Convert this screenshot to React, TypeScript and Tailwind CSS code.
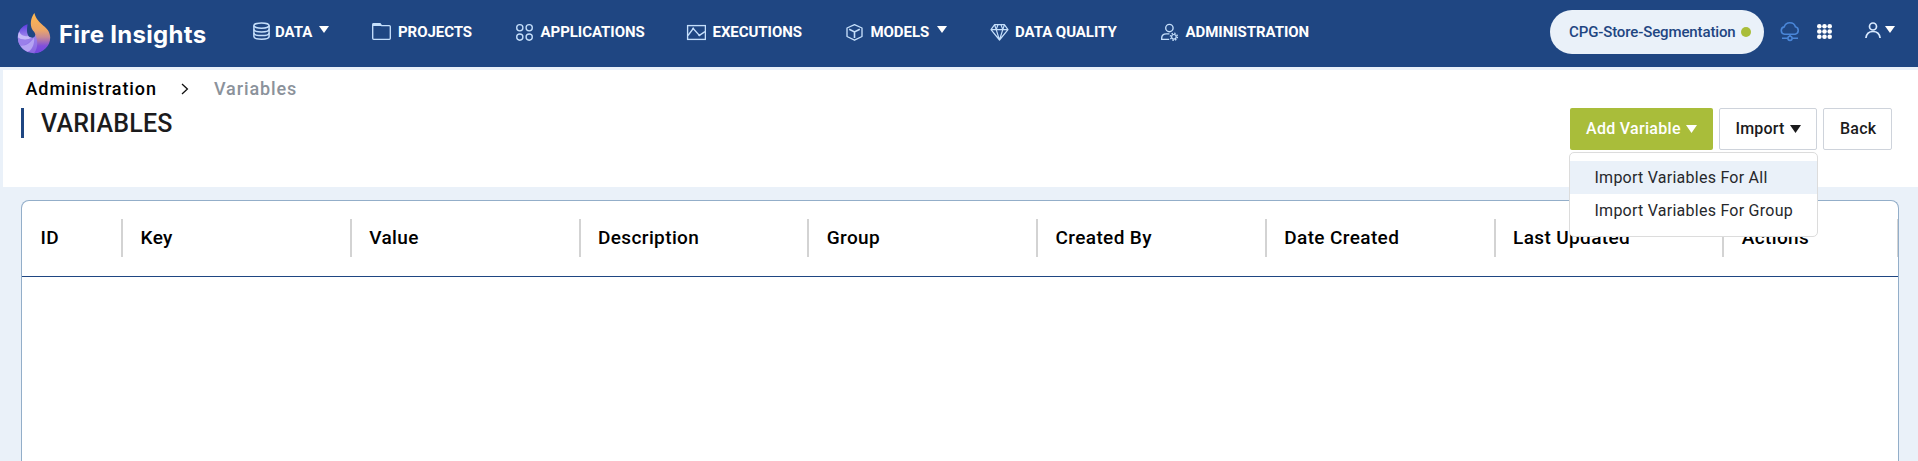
import React from "react";

const ICON = "#c5dffb";

function Caret({ className = "" }: { className?: string }) {
  return (
    <svg className={className} width="10" height="7" viewBox="0 0 10 7" preserveAspectRatio="none" fill="currentColor">
      <path d="M0 0H10L5 7Z" />
    </svg>
  );
}

function NavIcon({ children }: { children: React.ReactNode }) {
  return (
    <svg className="h-5 w-5 shrink-0" viewBox="0 0 20 20" fill="none" stroke={ICON} strokeWidth="1.35">
      {children}
    </svg>
  );
}

function DatabaseIcon() {
  return (
    <NavIcon>
      <g strokeWidth="1.5">
        <ellipse cx="9.5" cy="3.6" rx="7.6" ry="2.6" />
        <path d="M1.9 3.6v10.900c0 1.600 3.400 2.700 7.600 2.700s7.600-1.100 7.600-2.700V3.600" />
        <path d="M1.900 7.300c0 1.500 3.400 2.600 7.600 2.600s7.600-1.100 7.600-2.600M1.900 11c0 1.500 3.400 2.600 7.600 2.600s7.600-1.100 7.600-2.600" />
      </g>
    </NavIcon>
  );
}

function FolderIcon() {
  return (
    <NavIcon>
      <path d="M1.7 3.5V16.3q0 1 1 1H18.3q1 0 1-1V4.6q0-1-1-1H10.6L9 1.7H2.7q-1 0-1 1Z" />
      <path d="M1.6 1.2H9L11 4H1.6Z" fill={ICON} stroke="none" />
    </NavIcon>
  );
}

function AppsIcon() {
  return (
    <NavIcon>
      <circle cx="4.8" cy="5.7" r="3.1" />
      <circle cx="14.2" cy="5.7" r="3.1" />
      <circle cx="4.8" cy="15.1" r="3.1" />
      <circle cx="14.2" cy="15.1" r="3.1" />
    </NavIcon>
  );
}

function ExecutionsIcon() {
  return (
    <NavIcon>
      <rect x="1.6" y="3.6" width="17.8" height="13.8" />
      <path d="M2 13.5L7.2 6.6L13.4 13.4L19 9.6" />
      <path d="M6.2 6.6a1 1 0 1 0 2 0a1 1 0 1 0-2 0M12.3 13.2a1 1 0 1 0 2 0a1 1 0 1 0-2 0" fill={ICON} stroke="none" />
    </NavIcon>
  );
}

function CubeIcon() {
  return (
    <NavIcon>
      <path d="M9.5 2.6L17 6V14.5L9.5 18.2L2 14.5V6Z" strokeLinejoin="round" />
      <path d="M4.2 7.2L9.5 9.9L14.8 7.2M9.5 9.9V16" strokeWidth="1.6" />
    </NavIcon>
  );
}

function DiamondIcon() {
  return (
    <NavIcon>
      <path
        d="M4.6 2.7H14.4L18 7.6L9.5 18L1 7.6ZM1 7.6H18M6.2 7.6L9.5 18L12.8 7.6M4.6 2.7L6.2 7.6L8 2.7M11 2.7L12.8 7.6L14.4 2.7"
        strokeLinejoin="round"
        strokeWidth="1.2"
      />
    </NavIcon>
  );
}

function UserGearIcon() {
  return (
    <NavIcon>
      <circle cx="9.4" cy="6" r="3.7" />
      <path d="M9.2 17.4H1.7V16c0-2.6 2-4.2 4.6-4.2H9.4" />
      <circle cx="13.9" cy="14.8" r="2.3" strokeWidth="1.2" />
      <circle cx="13.9" cy="14.8" r="3.5" strokeWidth="1.4" strokeDasharray="1.37 1.37" />
    </NavIcon>
  );
}

function Logo() {
  return (
    <svg className="h-[42px] w-[34px] shrink-0" viewBox="0 0 34 42">
      <defs>
        <linearGradient id="flame" x1="0" y1="0" x2="0" y2="1">
          <stop offset="0" stopColor="#ffb84d" />
          <stop offset="0.42" stopColor="#eda667" />
          <stop offset="0.6" stopColor="#c78a95" />
          <stop offset="0.82" stopColor="#7f4fdc" />
          <stop offset="1" stopColor="#7446e0" />
        </linearGradient>
        <linearGradient id="swirl" x1="0.3" y1="0" x2="0.4" y2="1">
          <stop offset="0" stopColor="#5a3be0" />
          <stop offset="0.4" stopColor="#9b83ec" />
          <stop offset="1" stopColor="#8a66e0" />
        </linearGradient>
      </defs>
      <path d="M10.600 12.200C5 13.800 .8 19 .8 25.600C.8 34.400 8 41.200 17 41.200C23 41.200 27 38 28 33L18.400 22.500C18 25.600 15.600 26.200 13.600 25.400C9.800 23.800 9.400 19 10.600 12.200Z" fill="url(#swirl)" />
      <path d="M2.200 19.800C3.600 22.800 7 25 11 24C12 25.200 13.600 25.800 15.200 25.600C11 28.400 5 28.500 .9 25.500C.9 23.400 1.400 21.600 2.200 19.800Z" fill="#c6baf8" />
      <path d="M15.200 25.600C12 31 7 34.500 3.200 33.600C1.600 31.200 .8 28.600 .9 25.500C5 28.500 11 28.400 15.200 25.600Z" fill="#9a80ea" />
      <path d="M17 25.400C18 33 14 39 10.400 39.800C7.400 38.600 4.800 36.400 3.200 33.600C9 34 14 30.600 17 25.400Z" fill="#b5a3f3" />
      <path d="M17.400 1C14.400 5 13 10.500 14.400 15.400C15.200 18.400 18.200 19.800 18.400 23C20.800 28 21.400 36 17 41.200C26 41.200 33.200 34.400 33.200 25.600C33.200 14 20.500 13.500 17.400 1Z" fill="url(#flame)" />
    </svg>
  );
}

type NavEntry = {
  label: string;
  icon: React.ReactNode;
  width: string;
  gap: string;
  caret?: string;
};

const NAV: NavEntry[] = [
  { label: "DATA", icon: <DatabaseIcon />, width: "w-[119px]", gap: "ml-[3px]", caret: "ml-[7px]" },
  { label: "PROJECTS", icon: <FolderIcon />, width: "w-36", gap: "ml-[7px]" },
  { label: "APPLICATIONS", icon: <AppsIcon />, width: "w-[171px]", gap: "ml-[5.500px]" },
  { label: "EXECUTIONS", icon: <ExecutionsIcon />, width: "w-[159px]", gap: "ml-[6.500px]" },
  { label: "MODELS", icon: <CubeIcon />, width: "w-[145px]", gap: "ml-[5.500px]", caret: "ml-[7.500px]" },
  { label: "DATA QUALITY", icon: <DiamondIcon />, width: "w-[170px]", gap: "ml-[5px]" },
  { label: "ADMINISTRATION", icon: <UserGearIcon />, width: "w-[160px]", gap: "ml-[5.500px]" },
];

function TopBar() {
  return (
    <header className="flex h-[67px] items-start bg-[#1f4682] text-white">
      <div className="flex w-[252px] shrink-0 items-start pt-3 pl-[17px]">
        <Logo />
        <span className="mt-[6px] ml-[8px] whitespace-nowrap font-['Inter',sans-serif] text-[24px] leading-[34px] font-bold tracking-[0.300px]">
          Fire Insights
        </span>
      </div>
      <nav className="flex shrink-0 pt-[22px]">
        {NAV.map((n) => (
          <a key={n.label} className={`flex h-5 shrink-0 items-start ${n.width}`}>
            {n.icon}
            <span className={`whitespace-nowrap text-[15px] leading-5 font-bold tracking-[-0.050px] ${n.gap}`}>{n.label}</span>
            {n.caret && <Caret className={`mt-1 ${n.caret}`} />}
          </a>
        ))}
      </nav>
      <div className="ml-auto flex items-start pt-[10px] pr-[23px]">
        <div className="flex h-11 w-[214px] items-center rounded-full bg-[#eaf1f9] pl-[19px] text-[15px] font-medium text-[#1f4682]">
          <span className="whitespace-nowrap tracking-[-0.120px]">CPG-Store-Segmentation</span>
          <span className="mr-[13px] ml-auto h-[10px] w-[10px] rounded-full bg-[#a9bd3a]" />
        </div>
        <svg className="mt-[11px] ml-[16px]" width="20" height="21" viewBox="0 0 20 21" fill="none" stroke="#4a86d8" strokeWidth="1.6">
          <path d="M4.6 13.2a3.7 3.7 0 0 1-.4-7.3C5 3.2 7 1.7 9.8 1.7s5 1.6 5.6 4.1a3.8 3.8 0 0 1-.2 7.4Z" />
          <path d="M10 13.2V15.2M2 17.3H7.8M12.2 17.3H18" />
          <circle cx="10" cy="17.3" r="2.1" />
        </svg>
        <svg className="mt-[14px] ml-[17px]" width="15" height="15" viewBox="0 0 15 15" fill="#ffffff">
          {[2.3, 7.5, 12.7].map((y) =>
            [2.3, 7.5, 12.7].map((x) => <circle key={`${x}-${y}`} cx={x} cy={y} r="2.3" />)
          )}
        </svg>
        <svg className="mt-3 ml-[33px]" width="16" height="16" viewBox="0 0 16 16" fill="none" stroke="#d9eaff" strokeWidth="1.7">
          <circle cx="8" cy="4.5" r="3.5" />
          <path d="M.9 16c.5-4 3.3-6.5 7.1-6.5s6.600 2.500 7.100 6.500" />
        </svg>
        <Caret className="mt-4 ml-1" />
      </div>
    </header>
  );
}

function ImportMenu() {
  return (
    <div className="absolute top-[44px] -left-[1px] z-10 h-[85px] w-[249px] rounded-[5px] border border-[#dcdcdc] bg-white pt-2 text-[16px] font-normal tracking-[0.250px] text-[#26282c]">
      <div className="h-[33px] bg-[#eaf1f9] pl-[24.500px] leading-[33px]">Import Variables For All</div>
      <div className="h-[33px] pl-[24.500px] leading-[33px]">Import Variables For Group</div>
    </div>
  );
}

function PageHead() {
  return (
    <section className="mt-[3px] ml-[3px] flex h-[117px] items-start justify-between bg-white pr-[26px]">
      <div className="flex flex-col pl-[18px]">
        <div className="mt-[7px] flex h-6 items-center pl-[4.500px] text-[18px] leading-6 font-medium tracking-[0.900px] text-black">
          <span className="w-[155.500px]">Administration</span>
          <svg width="8" height="12" viewBox="0 0 8 12" fill="none" stroke="#111111" strokeWidth="1.3">
            <path d="M1 1L6.4 6L1 11" />
          </svg>
          <span className="ml-[25px] text-[#8b929b]">Variables</span>
        </div>
        <h1 className="mt-[7px] flex h-[30px] items-center border-l-[3px] border-[#1f4682] pt-[2px] pl-[17px] text-[25px] leading-[30px] font-medium tracking-[0.180px] text-[#1b1b1d]">
          VARIABLES
        </h1>
      </div>
      <div className="relative mt-[38px] flex gap-[6px] text-[16px] font-medium text-[#1b1b1d]">
        <button className="flex h-[42px] w-[143px] items-center rounded-[2px] bg-[#a9bd3a] pl-4 text-white">
          <span className="tracking-[0.300px]">Add Variable</span>
          <Caret className="ml-[5px] h-2 w-[11px]" />
        </button>
        <button className="flex h-[42px] w-[98px] items-center rounded-[2px] border border-[#ced3db] pl-[15.500px]">
          <span className="tracking-[0.200px]">Import</span>
          <Caret className="ml-[5px] h-2 w-[11px]" />
        </button>
        <button className="flex h-[42px] w-[69px] items-center rounded-[2px] border border-[#ced3db] pl-4 tracking-[0.200px]">Back</button>
        <ImportMenu />
      </div>
    </section>
  );
}

const COLUMNS = ["Key", "Value", "Description", "Group", "Created By", "Date Created", "Last Updated"];

function VariablesTable() {
  return (
    <section className="mt-[13px] mr-[19px] ml-[21px] flex-1 rounded-t-[8px] border border-b-0 border-[#93aec9] bg-white">
      <div className="flex h-[76px] items-start border-b border-[#1f4682] pt-[18px] text-[19px] leading-[38px] font-medium tracking-[0.380px] text-black">
        <div className="h-[38px] w-[101px] border-r-2 border-[#d3d3d3] pl-[18.500px]">ID</div>
        {COLUMNS.map((c) => (
          <div key={c} className="h-[38px] w-[228.75px] border-r-2 border-[#d3d3d3] pl-[17.500px]">
            {c}
          </div>
        ))}
        <div className="h-[38px] flex-1 border-r border-[#d3d3d3] pl-[17.500px]">Actions</div>
      </div>
    </section>
  );
}

export default function App() {
  return (
    <div className="flex h-[461px] w-[1918px] flex-col overflow-hidden bg-[#eaf1f9] font-['Roboto',sans-serif]">
      <TopBar />
      <PageHead />
      <VariablesTable />
    </div>
  );
}
